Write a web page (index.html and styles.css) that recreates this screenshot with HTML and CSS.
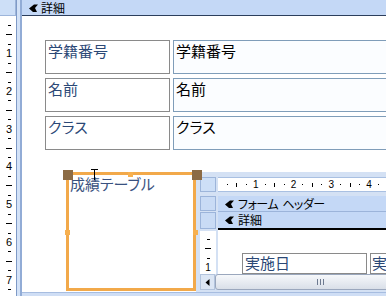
FILE: index.html
```html
<!DOCTYPE html>
<html>
<head>
  <meta charset="UTF-8">
  <title>フォーム デザイン</title>
  <link rel="stylesheet" href="styles.css">
</head>
<body>

  <div class="designer">
    <div class="corner"></div>
    <div class="split"></div>
    <div class="section-bar">
      <svg class="sec-icon" width="9" height="8" viewBox="0 0 9 8"><path d="M0 4.5 L5 0.5 H9 L6 4 L8 8 H4 Z" fill="#000"/></svg>
      <span>詳細</span>
    </div>

    <div class="vruler">
      <i class="t"></i><i class="t mid"></i><i class="t"></i><b>1</b>
      <i class="t"></i><i class="t mid"></i><i class="t"></i><b>2</b>
      <i class="t"></i><i class="t mid"></i><i class="t"></i><b>3</b>
      <i class="t"></i><i class="t mid"></i><i class="t"></i><b>4</b>
      <i class="t"></i><i class="t mid"></i><i class="t"></i><b>5</b>
      <i class="t"></i><i class="t mid"></i><i class="t"></i><b>6</b>
      <i class="t"></i><i class="t mid"></i><i class="t"></i><b>7</b>
      <i class="t"></i>
    </div>

    <div class="canvas-col">
      <div class="canvas">
        <div class="field-row">
          <div class="label">学籍番号</div>
          <div class="textbox">学籍番号</div>
        </div>
        <div class="field-row">
          <div class="label">名前</div>
          <div class="textbox">名前</div>
        </div>
        <div class="field-row">
          <div class="label">クラス</div>
          <div class="textbox">クラス</div>
        </div>

        <div class="sub-row">
          <div class="selected">
            <span>成績テーブル</span>
            <div class="handle big tl"></div>
            <div class="handle big tr"></div>
            <div class="handle small tm"></div>
            <div class="handle small ml"></div>
            <div class="handle small mr"></div>
            <svg class="ibeam" width="7" height="12" viewBox="0 0 7 12"><path d="M0 0.5 H7 M3.5 0.5 V11" stroke="#000" stroke-width="1"/></svg>
          </div>

          <div class="subform">
            <div class="sub-corner"></div>
            <div class="hruler">
              <i class="t"></i><i class="t mid"></i><i class="t"></i><b>1</b>
              <i class="t"></i><i class="t mid"></i><i class="t"></i><b>2</b>
              <i class="t"></i><i class="t mid"></i><i class="t"></i><b>3</b>
              <i class="t"></i><i class="t mid"></i><i class="t"></i><b>4</b>
              <i class="t"></i><i class="t mid"></i>
            </div>

            <div class="sub-side">
              <div class="sel-box"></div>
              <div class="sel-box tall"></div>
              <div class="vruler small">
                <i class="t"></i><i class="t mid"></i><i class="t"></i><b>1</b>
              </div>
            </div>

            <div class="sub-main">
              <div class="section-bar sub">
                <svg class="sec-icon" width="9" height="8" viewBox="0 0 9 8"><path d="M0 4.5 L5 0.5 H9 L6 4 L8 8 H4 Z" fill="#000"/></svg>
                <span>フォーム ヘッダー</span>
              </div>
              <div class="section-bar sub detail">
                <svg class="sec-icon" width="9" height="8" viewBox="0 0 9 8"><path d="M0 4.5 L5 0.5 H9 L6 4 L8 8 H4 Z" fill="#000"/></svg>
                <span>詳細</span>
              </div>
              <div class="sub-detail">
                <div class="label short">実施日</div>
                <div class="label short narrow">実</div>
              </div>
            </div>

            <div class="hscroll">
              <div class="arrow-btn"><svg width="5" height="7" viewBox="0 0 5 7"><path d="M4.5 0 V7 L0.5 3.5 Z" fill="#000"/></svg></div>
              <div class="thumb"><span class="grip"></span></div>
            </div>
          </div>
        </div>
      </div>
      <div class="bottom-strip"></div>
    </div>
  </div>

</body>
</html>
```

FILE: styles.css
```css
body {
  margin: 0;
  background-color: #fff;
  font-family: "Noto Sans CJK JP", sans-serif;
  font-feature-settings: "palt";
  overflow: hidden;
}

.designer {
  display: grid;
  grid-template-columns: 16px 6px 364px;
  grid-template-rows: 16px 280px;
  width: 386px;
  height: 296px;
  overflow: hidden;
}

.corner {
  background-color: #cddff7;
  border-right: 1px solid #9db5da;
  border-bottom: 1px solid #9db5da;
}

.split {
  grid-row: 1 / 3;
  grid-column: 2;
  background-color: #d3e2f7;
  border-left: 1px solid #7f9ac6;
  border-right: 2px solid #92acd6;
}

.section-bar {
  display: flex;
  align-items: center;
  gap: 3px;
  padding-left: 7px;
  background-color: #c4d8f6;
  border-bottom: 1px solid #2c3e5c;
  font-size: 12px;
  line-height: 14px;
  color: #000;
  overflow: hidden;
  white-space: nowrap;
}

.sec-icon {
  flex: none;
}

/* vertical ruler */
.vruler {
  display: flex;
  flex-direction: column;
  padding-top: 4.7px;
  background-color: #fff;
  overflow: hidden;
}

.vruler > * {
  flex: none;
  height: 9.45px;
  display: flex;
  align-items: center;
  justify-content: center;
  padding-left: 2px;
  font: 11px/1 "Liberation Sans", sans-serif;
  font-style: normal;
}

.vruler .t::before {
  content: "";
  width: 3px;
  height: 1px;
  background-color: #000;
}

.vruler .t.mid::before {
  width: 6px;
}

.vruler.small {
  flex: 1;
  margin-top: 1px;
  padding-top: 3.7px;
}

.vruler.small > * {
  padding-left: 0;
  font-size: 10px;
}

/* main canvas */
.canvas-col {
  display: flex;
  flex-direction: column;
}

.canvas {
  flex: 1;
  padding: 24px 0 0 23px;
  background-color: #fff;
  overflow: hidden;
}

.bottom-strip {
  height: 4px;
  background-color: #cfdef5;
  border-top: 1px solid #a7bde0;
  box-sizing: border-box;
}

.field-row {
  display: flex;
  gap: 3px;
  height: 34px;
  margin-bottom: 4px;
}

.label, .textbox {
  flex: none;
  box-sizing: border-box;
  padding: 1px 2px;
  font-size: 15px;
  line-height: 18px;
  white-space: nowrap;
  overflow: hidden;
}

.label {
  width: 125px;
  border: 1px solid #8a8a8a;
  color: #2b4876;
  background-color: #fff;
}

.textbox {
  width: 230px;
  border: 1px solid #7f9db9;
  color: #000;
  background-color: #fbfdff;
}

.sub-row {
  display: flex;
  height: 120px;
  margin: 22px 0 0 21px;
}

/* selected label control */
.selected {
  position: relative;
  flex: none;
  width: 130px;
  height: 119px;
  box-sizing: border-box;
  border: 3px solid #f2a94a;
  padding: 0 1px;
  font-size: 15px;
  line-height: 18px;
  color: #3a5280;
  white-space: nowrap;
}

.handle {
  position: absolute;
}

.handle.big {
  width: 10px;
  height: 10px;
  background-color: #8c6b45;
  top: -5px;
}

.handle.tl { left: -6px; }
.handle.tr { left: 123px; }

.handle.small {
  width: 5px;
  height: 5px;
  background-color: #f7b04f;
}

.handle.tm { left: 59px; top: -3px; }
.handle.ml { left: -4px; top: 55px; }
.handle.mr { left: 124px; top: 55px; }

.ibeam {
  position: absolute;
  left: 22px;
  top: -6px;
}

/* embedded sub form */
.subform {
  flex: 1;
  display: grid;
  grid-template-columns: 16px 1fr;
  grid-template-rows: 19px 78px 16px;
  column-gap: 2px;
  padding: 5px 0 2px 4px;
  background-color: #d4e1f4;
  overflow: hidden;
}

.sub-corner {
  height: 15px;
  background-color: #cddff7;
  border: 1px solid #9db5da;
  box-sizing: border-box;
}

.hruler {
  display: flex;
  height: 15px;
  padding-left: 4.7px;
  background-color: #fff;
  border-top: 1px solid #a9c0e2;
  border-bottom: 1px solid #a9c0e2;
  box-sizing: border-box;
  overflow: hidden;
}

.hruler > * {
  flex: none;
  width: 9.45px;
  display: flex;
  align-items: center;
  justify-content: center;
  font: 10px/1 "Liberation Sans", sans-serif;
  font-style: normal;
}

.hruler .t::before {
  content: "";
  width: 1px;
  height: 1px;
  background-color: #000;
}

.hruler .t.mid::before {
  height: 4px;
}

.sub-side {
  display: flex;
  flex-direction: column;
}

.sel-box {
  height: 15px;
  margin-bottom: 1px;
  background-color: #c9dbf5;
  border: 1px solid #9cb4da;
  box-sizing: border-box;
}

.sel-box.tall {
  height: 17px;
}

.sub-main {
  display: flex;
  flex-direction: column;
  min-width: 0;
}

.section-bar.sub {
  height: 16px;
  box-sizing: border-box;
  gap: 4px;
  letter-spacing: -0.5px;
  word-spacing: 2px;
  border-bottom-color: #9cb4da;
}

.section-bar.sub.detail {
  height: 18px;
  letter-spacing: 0;
  border-bottom: 2px solid #000;
}

.sub-detail {
  flex: 1;
  display: flex;
  gap: 3px;
  padding: 23px 0 0 24px;
  background-color: #fff;
}

.label.short {
  height: 21px;
  padding-top: 0;
}

.label.narrow {
  width: 40px;
  padding-left: 1px;
}

.hscroll {
  grid-column: 1 / -1;
  display: flex;
}

.arrow-btn {
  flex: none;
  width: 15px;
  display: flex;
  align-items: center;
  justify-content: center;
  background-color: #dce6f4;
  border: 1px solid #b3c4dd;
  box-sizing: border-box;
}

.thumb {
  flex: none;
  width: 210px;
  display: flex;
  align-items: center;
  justify-content: center;
  border: 1px solid #9aa7bd;
  border-radius: 3px;
  box-sizing: border-box;
  background: linear-gradient(#f6f8fb, #d9dfe8);
}

.grip {
  width: 7px;
  height: 6px;
  background: repeating-linear-gradient(90deg, #6d7a90 0 1px, transparent 1px 3px);
}
```
